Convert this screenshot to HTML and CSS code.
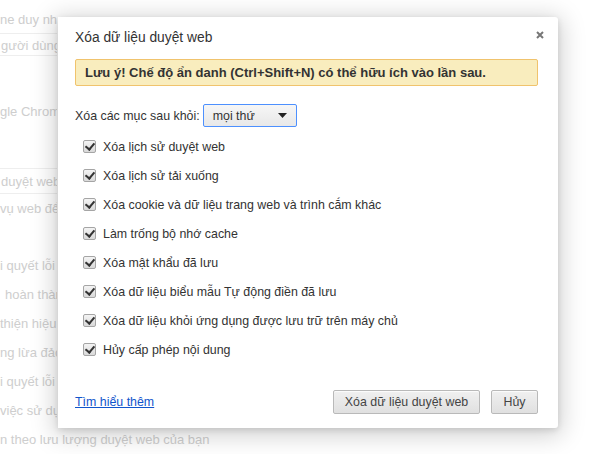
FILE: index.html
```html
<!DOCTYPE html>
<html lang="vi">
<head>
    <meta charset="UTF-8">
    <title>Xóa dữ liệu duyệt web</title>
    <link rel="stylesheet" href="styles.css">
</head>
<body>
    <div class="page">
        <div class="bg-line first">ne duy nhất</div>
        <div class="bg-input">gười dùng</div>
        <div class="bg-line gap">gle Chrome</div>
        <div class="bg-input gap">duyệt web</div>
        <div class="bg-line">vụ web để</div>
        <div class="bg-line gap-small">i quyết lỗi</div>
        <div class="bg-line indent">hoàn thành</div>
        <div class="bg-line">thiện hiệu</div>
        <div class="bg-line">ng lừa đảo</div>
        <div class="bg-line">i quyết lỗi</div>
        <div class="bg-line">việc sử dụng</div>
        <div class="bg-line last">n theo lưu lượng duyệt web của bạn</div>
    </div>

    <div class="overlay">
        <div class="dialog">
            <button class="close" title="Đóng">
                <svg width="8" height="8" viewBox="0 0 8 8"><path d="M1 1L7 7M7 1L1 7" stroke="#777" stroke-width="2"/></svg>
            </button>
            <h1 class="title">Xóa dữ liệu duyệt web</h1>
            <div class="notice">Lưu ý! Chế độ ẩn danh (Ctrl+Shift+N) có thể hữu ích vào lần sau.</div>

            <div class="range-row">
                <span>Xóa các mục sau khỏi:</span>
                <div class="select">
                    <span>mọi thứ</span>
                    <svg width="9" height="5" viewBox="0 0 9 5"><path d="M0 0H9L4.5 5Z" fill="#222"/></svg>
                </div>
            </div>

            <ul class="options">
                <li><span class="check"></span>Xóa lịch sử duyệt web</li>
                <li><span class="check"></span>Xóa lịch sử tải xuống</li>
                <li><span class="check"></span>Xóa cookie và dữ liệu trang web và trình cắm khác</li>
                <li><span class="check"></span>Làm trống bộ nhớ cache</li>
                <li><span class="check"></span>Xóa mật khẩu đã lưu</li>
                <li><span class="check"></span>Xóa dữ liệu biểu mẫu Tự động điền đã lưu</li>
                <li><span class="check"></span>Xóa dữ liệu khỏi ứng dụng được lưu trữ trên máy chủ</li>
                <li><span class="check"></span>Hủy cấp phép nội dung</li>
            </ul>

            <div class="footer">
                <a href="#" class="learn">Tìm hiểu thêm</a>
                <div class="buttons">
                    <button class="btn wide">Xóa dữ liệu duyệt web</button>
                    <button class="btn">Hủy</button>
                </div>
            </div>
        </div>
    </div>
</body>
</html>
```

FILE: styles.css
```css
body {
    margin: 0;
    font-family: "Liberation Sans", Arial, sans-serif;
    font-size: 12.4px;
    color: #333;
    background: #fff;
    overflow: hidden;
}
.page {
    padding-top: 7px;
    color: #c6c6c6;
    white-space: nowrap;
    font-size: 13px;
}
.bg-line {
    width: 57px;
    overflow: hidden;
    height: 29px;
    line-height: 29px;
}
.bg-line.first {
    height: 26px;
    line-height: 26px;
}
.bg-line.gap {
    margin-top: 41px;
}
.bg-line.gap-small {
    margin-top: 28px;
}
.bg-line.indent {
    padding-left: 5px;
    width: 52px;
}
.bg-line.last {
    width: auto;
}
.bg-input {
    width: 57px;
    overflow: hidden;
    height: 23px;
    line-height: 23px;
    padding-left: 1px;
    border: 1px solid #ececec;
    border-left: none;
    border-right: none;
    box-sizing: border-box;
}
.bg-input.gap {
    margin-top: 42px;
    height: 26px;
    line-height: 26px;
}

.overlay {
    position: absolute;
    top: 0;
    left: 0;
    right: 0;
    bottom: 0;
    background: rgba(255, 255, 255, 0.15);
}
.dialog {
    position: absolute;
    top: 17px;
    left: 58px;
    width: 500px;
    box-sizing: border-box;
    padding: 12px 20px 14px 17px;
    background: #fff;
    border-radius: 0 3px 3px 0;
    box-shadow: 0 4px 24px 4px rgba(0, 0, 0, 0.18), 0 2px 6px rgba(0, 0, 0, 0.12);
}
.close {
    position: absolute;
    top: 10px;
    right: 10px;
    width: 16px;
    height: 16px;
    padding: 0;
    border: none;
    background: none;
    display: flex;
    align-items: center;
    justify-content: center;
}
.title {
    margin: 0;
    font-size: 13.8px;
    font-weight: normal;
    line-height: 18px;
    color: #333;
}
.notice {
    margin-top: 12px;
    padding: 5px 9px;
    line-height: 15px;
    background: #f9edbe;
    border: 1px solid #f0c36d;
    border-radius: 2px;
    font-size: 13px;
    font-weight: bold;
    color: #333;
}
.range-row {
    margin-top: 18px;
    height: 23px;
    display: flex;
    align-items: center;
    gap: 3px;
}
.select {
    width: 94px;
    height: 23px;
    box-sizing: border-box;
    display: flex;
    align-items: center;
    justify-content: space-between;
    padding: 0 9px 0 9px;
    border: 1px solid #4d90fe;
    border-radius: 2px;
    background: linear-gradient(#f6f6f6, #e8e8e8);
    color: #333;
}
.options {
    list-style: none;
    margin: 5px 0 0;
    padding: 0 0 0 8px;
}
.options li {
    height: 29px;
    display: flex;
    align-items: center;
    gap: 7px;
}
.check {
    width: 13px;
    height: 13px;
    box-sizing: border-box;
    border: 1px solid #a5a5a5;
    border-radius: 2px;
    background: linear-gradient(#f4f4f4, #d9d9d9);
    position: relative;
}
.check::after {
    content: "";
    position: absolute;
    left: 3px;
    top: 0;
    width: 4px;
    height: 7px;
    border: solid #333;
    border-width: 0 2px 2px 0;
    transform: rotate(40deg);
}
.footer {
    margin-top: 26px;
    display: flex;
    align-items: center;
    justify-content: space-between;
}
.learn {
    color: #15c;
    text-decoration: underline;
}
.buttons {
    display: flex;
    gap: 11px;
}
.btn {
    height: 24px;
    min-width: 47px;
    padding: 0 10px;
    font-family: inherit;
    font-size: 12.4px;
    white-space: nowrap;
    color: #444;
    border: 1px solid #b9b9b9;
    border-radius: 2px;
    background: linear-gradient(#f0f0f0, #e0e0e0);
    box-shadow: inset 0 1px 1px rgba(255, 255, 255, 0.8);
}
.btn.wide {
    width: 147px;
}
```
